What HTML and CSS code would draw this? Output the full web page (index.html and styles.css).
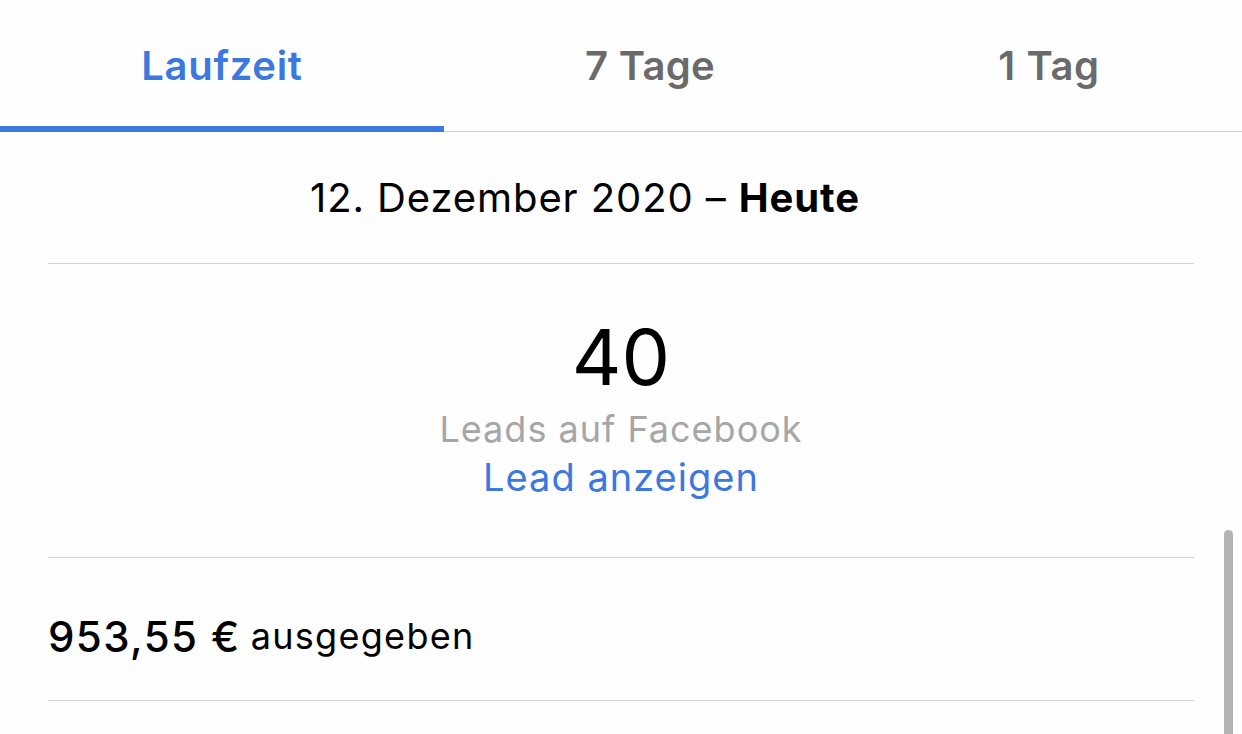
FILE: index.html
```html
<!DOCTYPE html>
<html lang="de">
<head>
<meta charset="utf-8">
<link rel="stylesheet" href="styles.css">
</head>
<body>
<div class="page">
  <nav class="tabs">
    <div class="tab tab-active">Laufzeit</div>
    <div class="tab tab-mid">7 Tage</div>
    <div class="tab tab-last">1 Tag</div>
  </nav>
  <div class="content">
    <div class="daterow"><span class="date">12. Dezember 2020 – <b>Heute</b></span></div>
    <div class="stat">
      <div class="num">40</div>
      <div class="label">Leads auf Facebook</div>
      <div class="link">Lead anzeigen</div>
    </div>
    <div class="spend"><span class="amount">953,55 €</span> <span class="spent">ausgegeben</span></div>
  </div>
  <div class="scrollbar"></div>
</div>
</body>
</html>
```
FILE: styles.css
```css
html, body { margin: 0; padding: 0; background: #fefefe; }
body { font-family: Inter, Roboto, "Liberation Sans", sans-serif; color: #000; }
.page { position: relative; width: 1242px; height: 734px; overflow: hidden; }
.tabs { display: flex; border-bottom: 1px solid #cfcfcf; box-sizing: border-box; height: 132px; }
.tab { display: flex; align-items: center; justify-content: center; font-size: 40px; font-weight: 600; color: #6a6a6a; box-sizing: border-box; }
.tab-active { width: 444px; color: #3b78e0; border-bottom: 6px solid #3b78e0; padding-top: 4px; margin-bottom: -1px; letter-spacing: 0.7px; }
.tab-mid { width: 412px; padding-top: 0; letter-spacing: 0.3px; }
.tab-last { width: 386px; padding-top: 0; letter-spacing: 0.6px; }
.content { margin: 0 48px; }
.daterow { height: 132px; border-bottom: 1px solid #d3d3d3; display: flex; align-items: center; justify-content: center; padding-right: 72px; box-sizing: border-box; }
.date { font-size: 40px; letter-spacing: 0.9px; }
.date b { font-weight: 700; }
.stat { height: 294px; border-bottom: 1px solid #d3d3d3; display: flex; flex-direction: column; align-items: center; box-sizing: border-box; padding-top: 48px; }
.num { font-size: 77px; line-height: 90px; }
.label { font-size: 36px; color: #a6a6a6; line-height: 50px; margin-top: 2px; letter-spacing: 1px; }
.link { font-size: 38px; color: #3b78e0; line-height: 46px; margin-top: 0; letter-spacing: 1px; }
.spend { height: 143px; border-bottom: 1px solid #d3d3d3; display: flex; align-items: center; box-sizing: border-box; padding-top: 14px; }
.amount { font-size: 42px; font-weight: 500; letter-spacing: 1.4px; }
.spent { font-size: 36px; margin-left: 10px; letter-spacing: 1.3px; }
.scrollbar { position: absolute; left: 1224px; top: 530px; width: 9px; height: 210px; background: #b3b3b3; border-radius: 5px; }
```
